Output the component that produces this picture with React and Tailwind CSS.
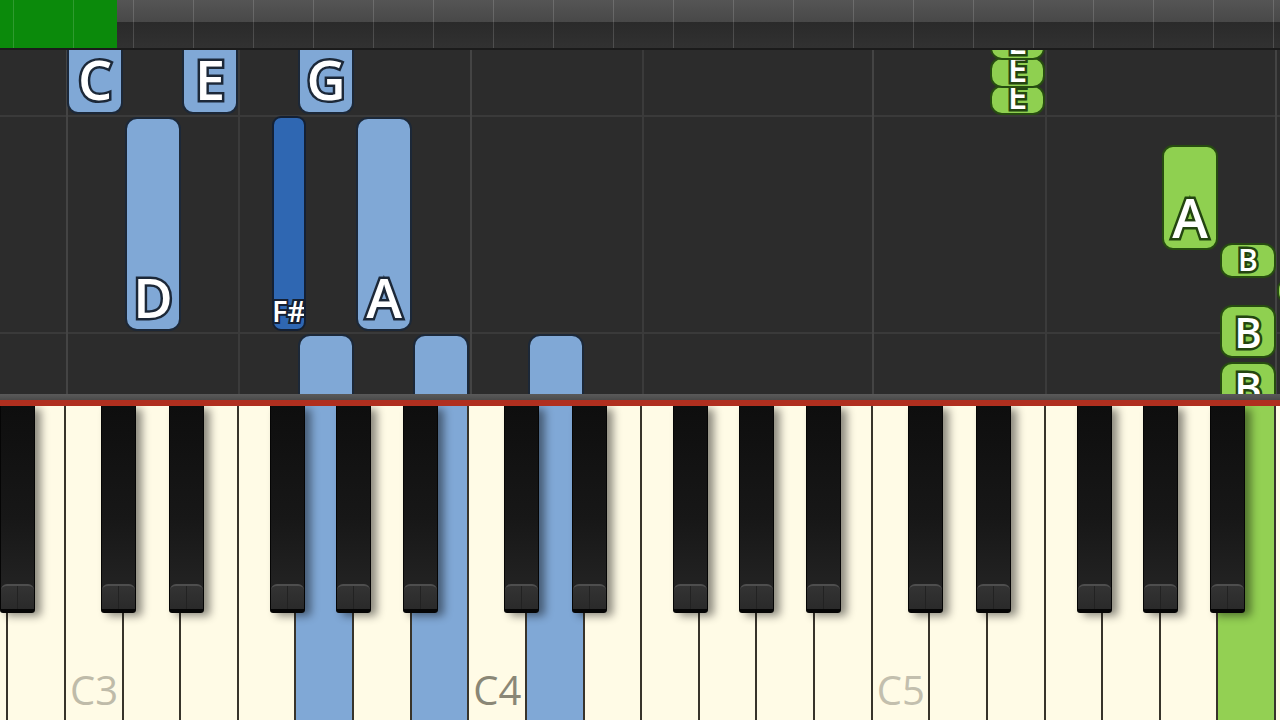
import React from 'react';

const KW = 57.64; // white key width
const C3X = 66; // x of the C3 key

const WHITE_NAMES = ['C', 'D', 'E', 'F', 'G', 'A', 'B'];
const BLACK_OFFSETS = [35, 103, 204, 270, 337];

// white keys from A2 (-2) to C6 (21)
const whiteKeys = [];
for (let i = -2; i <= 21; i++) {
    const name = WHITE_NAMES[((i % 7) + 7) % 7];
    const octave = 3 + Math.floor(i / 7);
    whiteKeys.push({ i, id: name + octave });
}

const pressed = {
    G3: 'bg-[#80a8d6]',
    B3: 'bg-[#80a8d6]',
    D4: 'bg-[#80a8d6]',
    B5: 'bg-[#93d053]',
};

const labels = {
    C3: 'text-[#bfbba9]',
    C4: 'text-[#8a8776]',
    C5: 'text-[#c3bfae]',
};

const blackKeys = [];
for (let o = -1; o <= 2; o++) {
    BLACK_OFFSETS.forEach((off) => {
        const x = C3X + o * KW * 7 + off;
        if (x > -30 && x < 1280) blackKeys.push(Math.round(x));
    });
}

const noteColors = {
    blue: 'bg-[#80a8d6] border-[#1c2838]',
    dark: 'bg-[#2f67b2] border-[#142033]',
    green: 'bg-[#8fd050] border-[#264c10]',
};

const letterStroke = {
    blue: '[-webkit-text-stroke:5px_#1c2838]',
    dark: '[-webkit-text-stroke:4px_#142033]',
    green: '[-webkit-text-stroke:5px_#234510]',
};

// top is relative to the note area (which starts at y=50)
const notes = [
    { x: 67, top: -20, h: 84, w: 56, label: 'C', c: 'blue', fs: 'text-[54px]', pb: 'pb-[6px]', r: 'rounded-b-[11px]' },
    { x: 182, top: -20, h: 84, w: 56, label: 'E', c: 'blue', fs: 'text-[54px]', pb: 'pb-[6px]', r: 'rounded-b-[11px]' },
    { x: 298, top: -20, h: 84, w: 56, label: 'G', c: 'blue', fs: 'text-[54px]', pb: 'pb-[6px]', r: 'rounded-b-[11px]' },
    { x: 125, top: 67, h: 214, w: 56, label: 'D', c: 'blue', fs: 'text-[54px]', pb: 'pb-[5px]', r: 'rounded-[12px]' },
    { x: 272, top: 66, h: 215, w: 34, label: 'F#', c: 'dark', fs: 'text-[29px]', pb: 'pb-[4px]', r: 'rounded-[9px]' },
    { x: 356, top: 67, h: 214, w: 56, label: 'A', c: 'blue', fs: 'text-[54px]', pb: 'pb-[5px]', r: 'rounded-[12px]' },
    { x: 298, top: 284, h: 80, w: 56, label: '', c: 'blue', fs: '', pb: '', r: 'rounded-t-[12px]' },
    { x: 413, top: 284, h: 80, w: 56, label: '', c: 'blue', fs: '', pb: '', r: 'rounded-t-[12px]' },
    { x: 528, top: 284, h: 80, w: 56, label: '', c: 'blue', fs: '', pb: '', r: 'rounded-t-[12px]' },
    { x: 990, top: -22, h: 32, w: 55, label: 'E', c: 'green', fs: 'text-[35px]', pb: 'pb-0', r: 'rounded-[12px]', z: 3 },
    { x: 990, top: 7, h: 31, w: 55, label: 'E', c: 'green', fs: 'text-[35px]', pb: 'pb-0', r: 'rounded-[12px]', z: 2 },
    { x: 990, top: 35, h: 30, w: 55, label: 'E', c: 'green', fs: 'text-[35px]', pb: 'pb-0', r: 'rounded-[12px]', z: 1 },
    { x: 1162, top: 95, h: 105, w: 56, label: 'A', c: 'green', fs: 'text-[54px]', pb: 'pb-[4px]', r: 'rounded-[11px]' },
    { x: 1220, top: 193, h: 35, w: 56, label: 'B', c: 'green', fs: 'text-[30px]', pb: 'pb-[1px]', r: 'rounded-[12px]' },
    { x: 1277, top: 229, h: 24, w: 20, label: '', c: 'green', fs: '', pb: '', r: 'rounded-[10px]' },
    { x: 1220, top: 255, h: 53, w: 56, label: 'B', c: 'green', fs: 'text-[42px]', pb: 'pb-[3px]', r: 'rounded-[12px]' },
    { x: 1220, top: 312, h: 60, w: 56, label: 'B', c: 'green', fs: 'text-[42px]', pb: 'pb-[27px]', r: 'rounded-[12px]', align: 'justify-start' },
];

const vLines = [
    { x: 66, cls: 'bg-[#444444]' },
    { x: 238, cls: 'bg-[#3b3b3b]' },
    { x: 470, cls: 'bg-[#444444]' },
    { x: 642, cls: 'bg-[#3b3b3b]' },
    { x: 872, cls: 'bg-[#444444]' },
    { x: 1045, cls: 'bg-[#3b3b3b]' },
    { x: 1275, cls: 'bg-[#444444]' },
];

function TopBar() {
    return (
        <div className="relative h-[50px] shrink-0 border-b-2 border-[#1b1b1b] bg-[linear-gradient(to_bottom,#555555_0px,#484848_22px,#2a2a2a_22px,#313131_48px)] overflow-hidden">
            {/* song progress */}
            <div className="absolute left-0 top-0 h-full w-[117px] bg-[#0b8a0b]" />
            <div className="absolute inset-0 flex pl-[13px]">
                {Array.from({ length: 22 }).map((_, k) => (
                    <div key={k} className="w-[60px] h-full shrink-0 border-l border-white/15" />
                ))}
            </div>
        </div>
    );
}

function Note({ n }) {
    return (
        <div
            className={`absolute flex ${n.align || 'justify-end'} flex-col items-center overflow-hidden border-2 ${n.r} ${noteColors[n.c]}`}
            style={{ left: n.x, top: n.top, width: n.w, height: n.h, zIndex: n.z || 0 }}
        >
            {n.label && (
                <span
                    className={`${n.fs} ${n.pb} ${letterStroke[n.c]} [paint-order:stroke_fill] leading-none font-semibold text-white font-['Open_Sans',sans-serif] ${n.align ? 'pt-[2px]' : ''}`}
                >
                    {n.label}
                </span>
            )}
        </div>
    );
}

function NoteArea() {
    return (
        <div className="relative h-[344px] shrink-0 overflow-hidden bg-[#2c2c2c]">
            {/* grid */}
            <div className="absolute left-0 right-0 top-[65px] h-[2px] bg-[#3a3a3a]" />
            <div className="absolute left-0 right-0 top-[282px] h-[2px] bg-[#3a3a3a]" />
            {vLines.map((l) => (
                <div key={l.x} className={`absolute top-0 bottom-0 w-[2px] ${l.cls}`} style={{ left: l.x }} />
            ))}
            {notes.map((n, k) => (
                <Note key={k} n={n} />
            ))}
        </div>
    );
}

function BlackKey({ x }) {
    return (
        <div
            className="absolute top-0 h-[207px] w-[35px] flex flex-col justify-end rounded-b-[3px] border-x border-b-[4px] border-[#050505] bg-[linear-gradient(to_bottom,#0e0e0e,#171717_55%,#262626)] shadow-[6px_3px_9px_rgba(0,0,0,0.45)]"
            style={{ left: x }}
        >
            <div className="h-[25px] rounded-t-[6px] border-t-2 border-[#4e4e4e] bg-[linear-gradient(to_bottom,#333333,#2a2a2a)] flex justify-center">
                <div className="w-px h-full bg-[#222222]" />
            </div>
        </div>
    );
}

function Keyboard() {
    return (
        <div className="relative h-[314px] shrink-0 overflow-hidden bg-[#fffbe6]">
            <div className="flex h-full ml-[-49.28px]">
                {whiteKeys.map((k) => (
                    <div
                        key={k.id}
                        className={`relative flex h-full w-[57.64px] shrink-0 items-end border-r-2 border-[#38342b] ${pressed[k.id] || 'bg-[#fffbe6]'}`}
                    >
                        {labels[k.id] && (
                            <span className={`pl-[4px] pb-[10px] text-[40px] leading-none font-['Open_Sans',sans-serif] ${labels[k.id]}`}>
                                {k.id}
                            </span>
                        )}
                    </div>
                ))}
            </div>
            {blackKeys.map((x) => (
                <BlackKey key={x} x={x} />
            ))}
        </div>
    );
}

export default function App() {
    return (
        <div className="flex h-[720px] w-[1280px] flex-col overflow-hidden bg-[#2c2c2c]">
            <TopBar />
            <NoteArea />
            <div className="h-[6px] shrink-0 bg-[linear-gradient(to_bottom,#5a5a5a,#4a4a4a)]" />
            <div className="h-[6px] shrink-0 bg-[#b02f1f]" />
            <Keyboard />
        </div>
    );
}
